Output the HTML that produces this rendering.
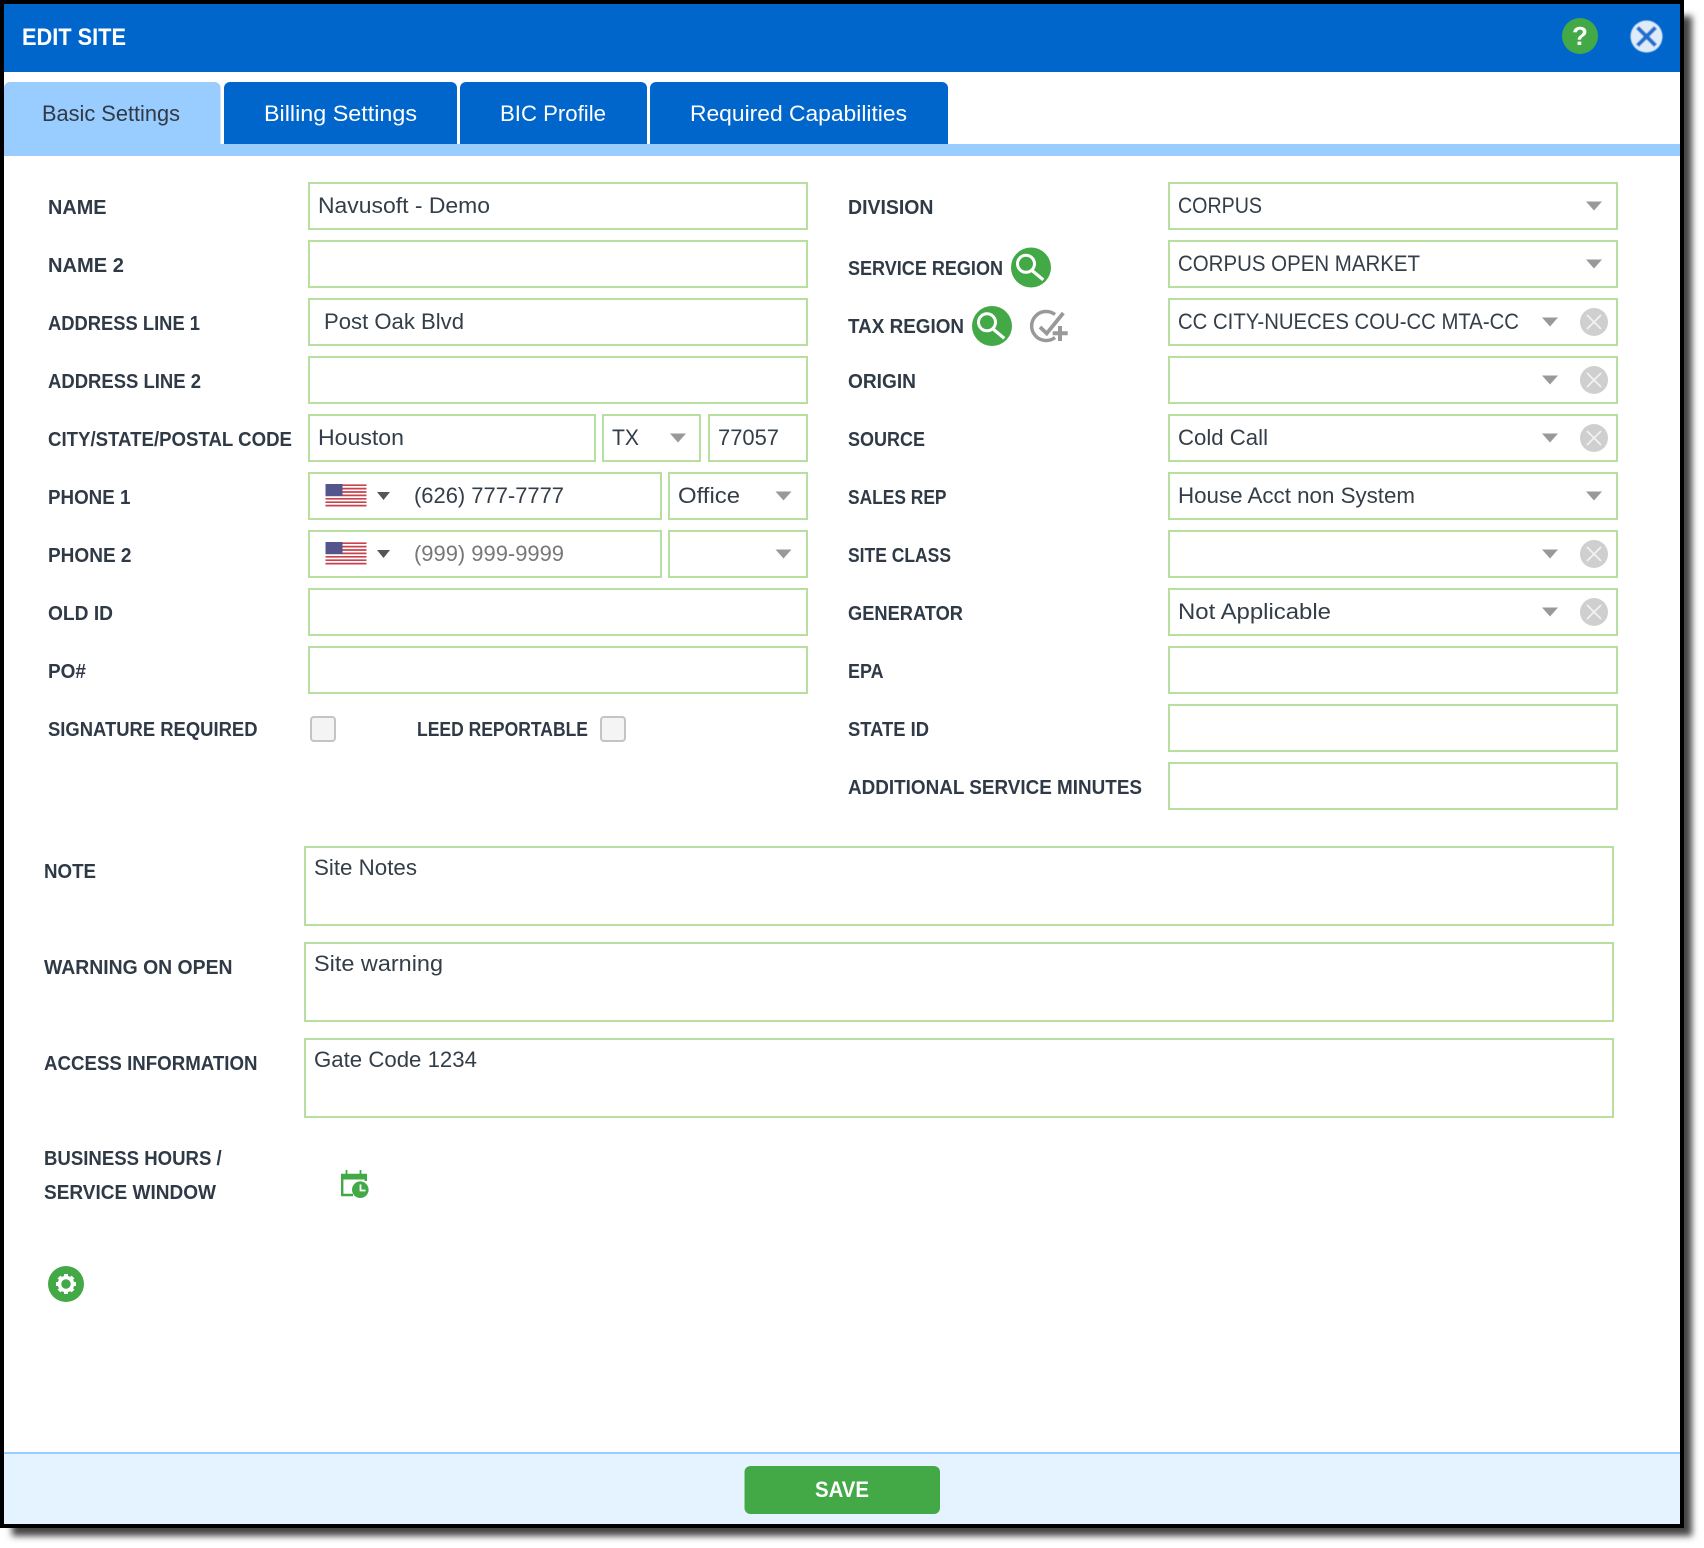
<!DOCTYPE html>
<html lang="en"><head><meta charset="utf-8"><title>Edit Site</title>
<style>
html,body{margin:0;padding:0;background:#fff;width:1704px;height:1548px;overflow:hidden}
svg{display:block}
text{font-family:"Liberation Sans",sans-serif;white-space:pre}
.l{font-size:20px;font-weight:700;fill:#2f3a46}
.v{font-size:22px;fill:#333e48}
.t{font-size:22px}
.b{fill:#fff;stroke:#b7df9f;stroke-width:2}
.c{fill:#999}
.x circle{fill:#cfcfcf}
.x path{stroke:#f2f2f2;stroke-width:1.800;fill:none}
</style></head><body>
<svg xmlns="http://www.w3.org/2000/svg" width="1704" height="1548" viewBox="0 0 1704 1548">
<defs>
<filter id="s" x="-5%" y="-5%" width="110%" height="110%"><feGaussianBlur stdDeviation="3.5"/></filter>
<filter id="soft" x="-20%" y="-20%" width="140%" height="140%"><feGaussianBlur stdDeviation="0.6"/></filter>
<g id="caret"><path d="M-8-4.5H8L0 4.5Z" class="c"/></g>
<g id="clr" class="x"><circle r="14"/><path d="M-7-7L7 7M7-7L-7 7"/></g>
<g id="mag"><circle r="20" fill="#43a947"/><circle cx="-5" cy="-3.7" r="8.5" fill="none" stroke="#fff" stroke-width="3"/><path d="M1 3L12.3 12.3" stroke="#fff" stroke-width="3.2" fill="none"/></g>
<g id="flag"><rect width="41" height="23" fill="#fff"/>
<path d="M0 1.2H41M0 4.6H41M0 8H41M0 11.4H41M0 14.8H41M0 18.2H41M0 21.6H41" stroke="#c9434f" stroke-width="1.7"/>
<rect width="17" height="12" fill="#55558e"/></g>
</defs>

<rect x="12" y="16" width="1680" height="1520" fill="#444" filter="url(#s)"/>
<rect x="0" y="0" width="1684" height="1528" fill="#000"/>
<rect x="4" y="4" width="1676" height="1520" fill="#fff"/>

<rect x="4" y="4" width="1676" height="68" fill="#0066cc"/>
<text x="22" y="45" font-size="24" font-weight="700" fill="#fff" textLength="104" lengthAdjust="spacingAndGlyphs">EDIT SITE</text>
<circle cx="1580" cy="36" r="18" fill="#43a947"/>
<text x="1580" y="45" font-size="26" font-weight="700" fill="#fff" text-anchor="middle">?</text>
<g filter="url(#soft)">
<circle cx="1646.500" cy="36.500" r="16" fill="#e0ebfa"/>
<path d="M1637.500 27.500L1655.500 45.500M1655.500 27.500L1637.500 45.500" stroke="#1a70cc" stroke-width="4" fill="none"/>
</g>

<rect x="4" y="144" width="1676" height="12" fill="#99ccff"/>
<path d="M4 156V88a6 6 0 0 1 6-6H214.500a6 6 0 0 1 6 6V156Z" fill="#99ccff"/>
<path d="M224 144V88a6 6 0 0 1 6-6H451a6 6 0 0 1 6 6V144Z" fill="#0066cc"/>
<path d="M460 144V88a6 6 0 0 1 6-6H641a6 6 0 0 1 6 6V144Z" fill="#0066cc"/>
<path d="M650 144V88a6 6 0 0 1 6-6H942a6 6 0 0 1 6 6V144Z" fill="#0066cc"/>
<text class="t" x="42" y="121" fill="#2f3a46" textLength="138" lengthAdjust="spacingAndGlyphs">Basic Settings</text>
<text class="t" x="264" y="121" fill="#fff" textLength="153" lengthAdjust="spacingAndGlyphs">Billing Settings</text>
<text class="t" x="500" y="121" fill="#fff" textLength="106" lengthAdjust="spacingAndGlyphs">BIC Profile</text>
<text class="t" x="690" y="121" fill="#fff" textLength="217" lengthAdjust="spacingAndGlyphs">Required Capabilities</text>

<!-- left labels -->
<text class="l" x="48" y="214" textLength="58.500" lengthAdjust="spacingAndGlyphs">NAME</text>
<text class="l" x="48" y="272" textLength="76" lengthAdjust="spacingAndGlyphs">NAME 2</text>
<text class="l" x="48" y="330" textLength="152" lengthAdjust="spacingAndGlyphs">ADDRESS LINE 1</text>
<text class="l" x="48" y="388" textLength="153" lengthAdjust="spacingAndGlyphs">ADDRESS LINE 2</text>
<text class="l" x="48" y="446" textLength="244" lengthAdjust="spacingAndGlyphs">CITY/STATE/POSTAL CODE</text>
<text class="l" x="48" y="504" textLength="82.400" lengthAdjust="spacingAndGlyphs">PHONE 1</text>
<text class="l" x="48" y="562" textLength="83.500" lengthAdjust="spacingAndGlyphs">PHONE 2</text>
<text class="l" x="48" y="620" textLength="65" lengthAdjust="spacingAndGlyphs">OLD ID</text>
<text class="l" x="48" y="678" textLength="38" lengthAdjust="spacingAndGlyphs">PO#</text>
<text class="l" x="48" y="736" textLength="209.500" lengthAdjust="spacingAndGlyphs">SIGNATURE REQUIRED</text>
<text class="l" x="417" y="736" textLength="171" lengthAdjust="spacingAndGlyphs">LEED REPORTABLE</text>

<!-- left inputs -->
<rect class="b" x="309" y="183" width="498" height="46"/>
<rect class="b" x="309" y="241" width="498" height="46"/>
<rect class="b" x="309" y="299" width="498" height="46"/>
<rect class="b" x="309" y="357" width="498" height="46"/>
<rect class="b" x="309" y="415" width="286" height="46"/>
<rect class="b" x="603" y="415" width="97" height="46"/>
<rect class="b" x="709" y="415" width="98" height="46"/>
<rect class="b" x="309" y="473" width="352" height="46"/>
<rect class="b" x="669" y="473" width="138" height="46"/>
<rect class="b" x="309" y="531" width="352" height="46"/>
<rect class="b" x="669" y="531" width="138" height="46"/>
<rect class="b" x="309" y="589" width="498" height="46"/>
<rect class="b" x="309" y="647" width="498" height="46"/>

<text class="v" x="318" y="213" textLength="172" lengthAdjust="spacingAndGlyphs">Navusoft - Demo</text>
<text class="v" x="324" y="329" textLength="140" lengthAdjust="spacingAndGlyphs">Post Oak Blvd</text>
<text class="v" x="318" y="445" textLength="86" lengthAdjust="spacingAndGlyphs">Houston</text>
<text class="v" x="612" y="445" textLength="27" lengthAdjust="spacingAndGlyphs">TX</text>
<use href="#caret" x="678" y="438"/>
<text class="v" x="718" y="445" textLength="61" lengthAdjust="spacingAndGlyphs">77057</text>

<use href="#flag" x="325.500" y="484"/>
<path d="M377 492H390L383.500 500Z" fill="#555"/>
<text class="v" x="414" y="503" textLength="150" lengthAdjust="spacingAndGlyphs">(626) 777-7777</text>
<text class="v" x="678" y="503" textLength="62" lengthAdjust="spacingAndGlyphs">Office</text>
<use href="#caret" x="783.500" y="496"/>

<use href="#flag" x="325.500" y="542"/>
<path d="M377 550H390L383.500 558Z" fill="#555"/>
<text class="v" x="414" y="561" style="fill:#777" textLength="150" lengthAdjust="spacingAndGlyphs">(999) 999-9999</text>
<use href="#caret" x="783.500" y="554"/>

<!-- checkboxes -->
<rect x="311" y="717" width="24" height="24" rx="3" fill="#f4f4f4" stroke="#c4c4c4" stroke-width="2"/>
<rect x="601" y="717" width="24" height="24" rx="3" fill="#f4f4f4" stroke="#c4c4c4" stroke-width="2"/>

<!-- right labels -->
<text class="l" x="848" y="214" textLength="85.500" lengthAdjust="spacingAndGlyphs">DIVISION</text>
<text class="l" x="848" y="275" textLength="155" lengthAdjust="spacingAndGlyphs">SERVICE REGION</text>
<text class="l" x="848" y="333" textLength="116" lengthAdjust="spacingAndGlyphs">TAX REGION</text>
<text class="l" x="848" y="388" textLength="68" lengthAdjust="spacingAndGlyphs">ORIGIN</text>
<text class="l" x="848" y="446" textLength="77" lengthAdjust="spacingAndGlyphs">SOURCE</text>
<text class="l" x="848" y="504" textLength="98.500" lengthAdjust="spacingAndGlyphs">SALES REP</text>
<text class="l" x="848" y="562" textLength="103" lengthAdjust="spacingAndGlyphs">SITE CLASS</text>
<text class="l" x="848" y="620" textLength="115" lengthAdjust="spacingAndGlyphs">GENERATOR</text>
<text class="l" x="848" y="678" textLength="35.500" lengthAdjust="spacingAndGlyphs">EPA</text>
<text class="l" x="848" y="736" textLength="81" lengthAdjust="spacingAndGlyphs">STATE ID</text>
<text class="l" x="848" y="794" textLength="294" lengthAdjust="spacingAndGlyphs">ADDITIONAL SERVICE MINUTES</text>

<use href="#mag" x="1031" y="267.500"/>
<use href="#mag" x="992" y="326"/>
<path d="M1055 314.500A14.500 14.500 0 1 0 1055 337.500" fill="none" stroke="#999" stroke-width="3.500"/>
<path d="M1040 327L1046.700 333.500L1063.300 313" fill="none" stroke="#999" stroke-width="3.800"/>
<path d="M1060 329V338M1055 333.300H1065" stroke="#fff" stroke-width="9"/>
<path d="M1060 326V341M1052.700 333.300H1067.700" stroke="#999" stroke-width="4"/>

<!-- right inputs -->
<rect class="b" x="1169" y="183" width="448" height="46"/>
<rect class="b" x="1169" y="241" width="448" height="46"/>
<rect class="b" x="1169" y="299" width="448" height="46"/>
<rect class="b" x="1169" y="357" width="448" height="46"/>
<rect class="b" x="1169" y="415" width="448" height="46"/>
<rect class="b" x="1169" y="473" width="448" height="46"/>
<rect class="b" x="1169" y="531" width="448" height="46"/>
<rect class="b" x="1169" y="589" width="448" height="46"/>
<rect class="b" x="1169" y="647" width="448" height="46"/>
<rect class="b" x="1169" y="705" width="448" height="46"/>
<rect class="b" x="1169" y="763" width="448" height="46"/>

<text class="v" x="1178" y="213" textLength="84" lengthAdjust="spacingAndGlyphs">CORPUS</text>
<use href="#caret" x="1594" y="206"/>
<text class="v" x="1178" y="271" textLength="242" lengthAdjust="spacingAndGlyphs">CORPUS OPEN MARKET</text>
<use href="#caret" x="1594" y="264"/>
<text class="v" x="1178" y="329" textLength="341" lengthAdjust="spacingAndGlyphs">CC CITY-NUECES COU-CC MTA-CC</text>
<use href="#caret" x="1550" y="322"/><use href="#clr" x="1594" y="322"/>
<use href="#caret" x="1550" y="380"/><use href="#clr" x="1594" y="380"/>
<text class="v" x="1178" y="445" textLength="90" lengthAdjust="spacingAndGlyphs">Cold Call</text>
<use href="#caret" x="1550" y="438"/><use href="#clr" x="1594" y="438"/>
<text class="v" x="1178" y="503" textLength="237" lengthAdjust="spacingAndGlyphs">House Acct non System</text>
<use href="#caret" x="1594" y="496"/>
<use href="#caret" x="1550" y="554"/><use href="#clr" x="1594" y="554"/>
<text class="v" x="1178" y="619" textLength="153" lengthAdjust="spacingAndGlyphs">Not Applicable</text>
<use href="#caret" x="1550" y="612"/><use href="#clr" x="1594" y="612"/>

<!-- notes -->
<text class="l" x="44" y="878" textLength="52" lengthAdjust="spacingAndGlyphs">NOTE</text>
<text class="l" x="44" y="974" textLength="188.500" lengthAdjust="spacingAndGlyphs">WARNING ON OPEN</text>
<text class="l" x="44" y="1070" textLength="213.500" lengthAdjust="spacingAndGlyphs">ACCESS INFORMATION</text>
<rect class="b" x="305" y="847" width="1308" height="78"/>
<rect class="b" x="305" y="943" width="1308" height="78"/>
<rect class="b" x="305" y="1039" width="1308" height="78"/>
<text class="v" x="314" y="875" textLength="103" lengthAdjust="spacingAndGlyphs">Site Notes</text>
<text class="v" x="314" y="971" textLength="129" lengthAdjust="spacingAndGlyphs">Site warning</text>
<text class="v" x="314" y="1067" textLength="163" lengthAdjust="spacingAndGlyphs">Gate Code 1234</text>

<text class="l" x="44" y="1165.200" textLength="177.700" lengthAdjust="spacingAndGlyphs">BUSINESS HOURS /</text>
<text class="l" x="44" y="1199.200" textLength="172" lengthAdjust="spacingAndGlyphs">SERVICE WINDOW</text>

<!-- calendar -->
<g fill="none" stroke="#43a947">
<path d="M353 1195H342.200V1175H365.800V1181" stroke-width="2.400"/>
<path d="M342 1175H366V1179H342Z" fill="#43a947" stroke-width="1"/>
<path d="M346.500 1170V1175M360.500 1170V1175" stroke-width="1.800"/>
</g>
<circle cx="360.300" cy="1189.700" r="8.300" fill="#43a947"/>
<path d="M360.500 1184.500V1190.500H365.500" fill="none" stroke="#fff" stroke-width="1.800"/>

<!-- gear -->
<circle cx="66" cy="1284" r="18" fill="#43a947"/>
<circle cx="66" cy="1284" r="6.500" fill="none" stroke="#fff" stroke-width="3.500"/>
<g stroke="#fff" stroke-width="4"><path d="M66 1274V1278M66 1290V1294M56 1284H60M72 1284H76M59 1277L62 1280M70 1288L73 1291M73 1277L70 1280M62 1288L59 1291"/></g>

<!-- footer -->
<rect x="4" y="1452" width="1676" height="72" fill="#e5f2ff"/>
<rect x="4" y="1452" width="1676" height="2" fill="#99ccff"/>
<rect x="744.500" y="1466" width="195.500" height="48" rx="6" fill="#43a947"/>
<text x="815" y="1497" font-size="22" font-weight="700" fill="#fff" textLength="54" lengthAdjust="spacingAndGlyphs">SAVE</text>
</svg>
</body></html>
